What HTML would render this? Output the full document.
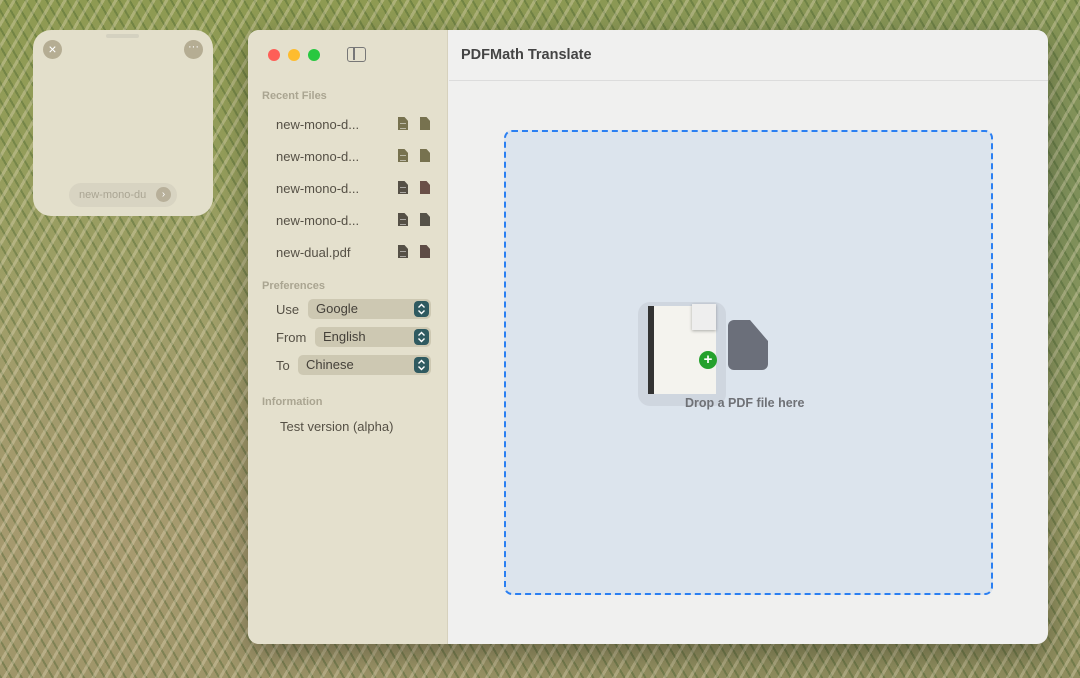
<!DOCTYPE html>
<html><head><meta charset="utf-8"><style>
*{box-sizing:border-box;margin:0;padding:0}
body{width:1080px;height:678px;overflow:hidden;position:relative;font-family:"Liberation Sans",sans-serif;
background:
repeating-linear-gradient(120deg,rgba(230,220,190,.35) 0 3px,transparent 3px 11px),
repeating-linear-gradient(60deg,rgba(60,90,40,.35) 0 2px,transparent 2px 9px),
radial-gradient(ellipse at 10% 80%,#a89a70,transparent 50%),
radial-gradient(ellipse at 95% 30%,#7d8f5a,transparent 50%),
linear-gradient(180deg,#8e9a52,#9aa064 50%,#8f8d5e);}
.widget{position:absolute;left:33px;top:30px;width:180px;height:186px;background:#e3dfcb;border-radius:18px}
.win{position:absolute;left:248px;top:30px;width:800px;height:614px;border-radius:11px;overflow:hidden;background:#f0f0ef;box-shadow:0 10px 30px rgba(0,0,0,.3)}
.side{position:absolute;left:0;top:0;width:200px;height:100%;background:#e4e0cd;border-right:1px solid #d6d1bd}
.dot{position:absolute;top:19px;width:12px;height:12px;border-radius:50%}
.hdr{position:absolute;left:14px;font-size:11px;font-weight:bold;color:#aaa591}
.row{position:absolute;left:28px;font-size:13px;color:#555045}
.ic{position:absolute;width:10px;height:13px;clip-path:polygon(0 0,65% 0,100% 30%,100% 100%,0 100%)}
.ic.l::after{content:"";position:absolute;left:2px;top:6px;width:6px;height:4px;border-top:1px solid rgba(255,255,255,.5);border-bottom:1px solid rgba(255,255,255,.5)}
.sel{position:absolute;height:20px;border-radius:5px;background:#cdc8b2;font-size:13px;color:#45413a;padding:2px 8px}
.st{position:absolute;right:2px;top:2px;width:15px;height:16px;border-radius:4px;background:#2f5a60}
.st svg{position:absolute;left:3px;top:2px}
</style></head><body>
<div class="widget">
 <div style="position:absolute;left:73px;top:4px;width:33px;height:4px;border-radius:2px;background:#d4d1c0"></div>
 <div style="position:absolute;left:10px;top:10px;width:19px;height:19px;border-radius:50%;background:#b5ad93;color:#fff;font-size:14px;text-align:center;line-height:19px">×</div>
 <div style="position:absolute;left:151px;top:10px;width:19px;height:19px;border-radius:50%;background:#b5ad93;color:#fff;font-size:11px;text-align:center;line-height:15px">···</div>
 <div style="position:absolute;left:36px;top:153px;width:108px;height:24px;border-radius:12px;background:#d8d4c2;font-size:11px;color:#aaa593;padding:6px 0 0 10px">new-mono-du<span style="position:absolute;right:6px;top:4px;width:15px;height:15px;border-radius:50%;background:#b8b09a;color:#fff;font-size:10px;text-align:center;line-height:15px">›</span></div>
</div>
<div class="win">
 <div class="side">
  <div class="dot" style="left:20px;background:#fe5f57"></div>
  <div class="dot" style="left:40px;background:#febc2e"></div>
  <div class="dot" style="left:60px;background:#28c840"></div>
  <div style="position:absolute;left:99px;top:17px;width:19px;height:15px;border:1.5px solid #777;border-radius:3px"><div style="position:absolute;left:5px;top:0;width:1.5px;height:12px;background:#777"></div></div>
  <div class="hdr" style="top:60px">Recent Files</div>
  <div class="row" style="top:87px">new-mono-d...</div><div class="ic l" style="left:150px;top:87px;background:#77724f"></div><div class="ic" style="left:172px;top:87px;background:#77724f"></div>
  <div class="row" style="top:119px">new-mono-d...</div><div class="ic l" style="left:150px;top:119px;background:#77724f"></div><div class="ic" style="left:172px;top:119px;background:#77724f"></div>
  <div class="row" style="top:151px">new-mono-d...</div><div class="ic l" style="left:150px;top:151px;background:#555046"></div><div class="ic" style="left:172px;top:151px;background:#6a5048"></div>
  <div class="row" style="top:183px">new-mono-d...</div><div class="ic l" style="left:150px;top:183px;background:#555046"></div><div class="ic" style="left:172px;top:183px;background:#555248"></div>
  <div class="row" style="top:215px">new-dual.pdf</div><div class="ic l" style="left:150px;top:215px;background:#555046"></div><div class="ic" style="left:172px;top:215px;background:#5e4c45"></div>
  <div class="hdr" style="top:250px">Preferences</div>
  <div class="row" style="top:272px">Use</div><div class="sel" style="left:60px;top:269px;width:123px">Google<div class="st"><svg width="9" height="12" viewBox="0 0 9 12" fill="none" stroke="#fff" stroke-width="1.4"><path d="M1.5 4.5L4.5 1.5L7.5 4.5M1.5 7.5L4.5 10.5L7.5 7.5"/></svg></div></div>
  <div class="row" style="top:300px">From</div><div class="sel" style="left:67px;top:297px;width:116px">English<div class="st"><svg width="9" height="12" viewBox="0 0 9 12" fill="none" stroke="#fff" stroke-width="1.4"><path d="M1.5 4.5L4.5 1.5L7.5 4.5M1.5 7.5L4.5 10.5L7.5 7.5"/></svg></div></div>
  <div class="row" style="top:328px">To</div><div class="sel" style="left:50px;top:325px;width:133px">Chinese<div class="st"><svg width="9" height="12" viewBox="0 0 9 12" fill="none" stroke="#fff" stroke-width="1.4"><path d="M1.5 4.5L4.5 1.5L7.5 4.5M1.5 7.5L4.5 10.5L7.5 7.5"/></svg></div></div>
  <div class="hdr" style="top:366px">Information</div>
  <div class="row" style="top:389px;left:32px">Test version (alpha)</div>
 </div>
 <div style="position:absolute;left:201px;top:0;right:0;height:51px;border-bottom:1px solid #dcdcdc;font-size:14.5px;font-weight:bold;color:#444;padding:17px 12px">PDFMath Translate</div>
 <div style="position:absolute;left:256px;top:100px;width:489px;height:465px;border:2px dashed #2a7ff2;border-radius:8px;background:#dce4ed">
  <div style="position:absolute;left:132px;top:170px;width:88px;height:104px;border-radius:12px;background:#cfd6df"></div>
  <div style="position:absolute;left:142px;top:174px;width:68px;height:88px;background:#f4f3ee;border-left:6px solid #333"></div>
  <div style="position:absolute;left:186px;top:172px;width:24px;height:26px;background:#eee;box-shadow:0 1px 3px rgba(0,0,0,.3)"></div>
  <div style="position:absolute;left:193px;top:219px;width:18px;height:18px;border-radius:50%;background:#25a12d;color:#fff;font-weight:bold;font-size:15px;text-align:center;line-height:17px">+</div>
  <div style="position:absolute;left:222px;top:188px;width:40px;height:50px;border-radius:6px;background:#6b6f7a;clip-path:polygon(0 0,55% 0,100% 42%,100% 100%,0 100%)"></div>
  <div style="position:absolute;left:179px;top:264px;font-size:12.5px;font-weight:bold;color:#6f7176">Drop a PDF file here</div>
 </div>
</div>
</body></html>
